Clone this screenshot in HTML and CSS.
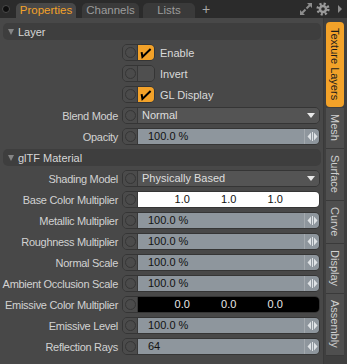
FILE: index.html
```html
<!DOCTYPE html>
<html>
<head>
<meta charset="utf-8">
<link rel="stylesheet" href="styles.css">
</head>
<body>
<div class="app">
  <div class="tabbar">
    <span class="dot"></span>
    <div class="tab active t-props">Properties</div>
    <div class="tab t-chan">Channels</div>
    <div class="tab t-lists">Lists</div>
    <span class="plus">+</span>
    <div class="tools">
      <svg class="ico" width="14" height="14" viewBox="0 0 14 14"><path d="M8 1h5v5z M1 8v5h5z" fill="#8c8c8c"/><path d="M7.5 6.5L11 3 M6.5 7.5L3 11" stroke="#8c8c8c" stroke-width="2"/></svg>
      <svg class="ico" width="14" height="14" viewBox="0 0 14 14"><circle cx="7" cy="7" r="5.3" fill="none" stroke="#9a9a9a" stroke-width="2.6" stroke-dasharray="2.1 2.06"/><circle cx="7" cy="7" r="4.3" fill="#9a9a9a"/><circle cx="7" cy="7" r="1.8" fill="#2b2b2b"/></svg>
      <svg class="ico tri-r" width="6" height="10" viewBox="0 0 6 10"><path d="M1 1l4 4-4 4z" fill="#8c8c8c"/></svg>
    </div>
  </div>
  <div class="main">
    <div class="content">
      <div class="group-head"><span class="caret"></span>Layer</div>
      <div class="rows">
        <div class="row"><span class="label"></span><div class="toggle on"><span class="knob"></span><span class="check"><svg width="17" height="15" viewBox="0 0 17 15"><path d="M3.6 7.2L4.4 12L12.6 4" fill="none" stroke="#000" stroke-width="2" stroke-linejoin="miter"/></svg></span></div><span class="tlabel">Enable</span></div>
        <div class="row"><span class="label"></span><div class="toggle"><span class="knob"></span><span class="check"></span></div><span class="tlabel">Invert</span></div>
        <div class="row"><span class="label"></span><div class="toggle on"><span class="knob"></span><span class="check"><svg width="17" height="15" viewBox="0 0 17 15"><path d="M3.6 7.2L4.4 12L12.6 4" fill="none" stroke="#000" stroke-width="2" stroke-linejoin="miter"/></svg></span></div><span class="tlabel">GL Display</span></div>
        <div class="row"><span class="label">Blend Mode</span><div class="field drop"><span class="knob"></span><span class="val">Normal</span><span class="arrow"></span></div></div>
        <div class="row"><span class="label">Opacity</span><div class="field slider"><span class="knob"></span><span class="val">100.0 %</span><span class="end"><svg width="13" height="15" viewBox="0 0 13 15"><path d="M5 3.5v8L1.5 7.5z M8 3.5v8l3.5-4z" fill="#dfe3e6"/><path d="M6.5 3v9" stroke="#dfe3e6" stroke-width="1"/></svg></span></div></div>
      </div>
      <div class="group-head"><span class="caret"></span>glTF Material</div>
      <div class="rows">
        <div class="row"><span class="label">Shading Model</span><div class="field drop"><span class="knob"></span><span class="val">Physically Based</span><span class="arrow"></span></div></div>
        <div class="row"><span class="label">Base Color Multiplier</span><div class="field color white"><span class="knob"></span><span class="vals"><span>1.0</span><span>1.0</span><span>1.0</span></span></div></div>
        <div class="row"><span class="label">Metallic Multiplier</span><div class="field slider"><span class="knob"></span><span class="val">100.0 %</span><span class="end"><svg width="13" height="15" viewBox="0 0 13 15"><path d="M5 3.5v8L1.5 7.5z M8 3.5v8l3.5-4z" fill="#dfe3e6"/><path d="M6.5 3v9" stroke="#dfe3e6" stroke-width="1"/></svg></span></div></div>
        <div class="row"><span class="label">Roughness Multiplier</span><div class="field slider"><span class="knob"></span><span class="val">100.0 %</span><span class="end"><svg width="13" height="15" viewBox="0 0 13 15"><path d="M5 3.5v8L1.5 7.5z M8 3.5v8l3.5-4z" fill="#dfe3e6"/><path d="M6.5 3v9" stroke="#dfe3e6" stroke-width="1"/></svg></span></div></div>
        <div class="row"><span class="label">Normal Scale</span><div class="field slider"><span class="knob"></span><span class="val">100.0 %</span><span class="end"><svg width="13" height="15" viewBox="0 0 13 15"><path d="M5 3.5v8L1.5 7.5z M8 3.5v8l3.5-4z" fill="#dfe3e6"/><path d="M6.5 3v9" stroke="#dfe3e6" stroke-width="1"/></svg></span></div></div>
        <div class="row"><span class="label">Ambient Occlusion Scale</span><div class="field slider"><span class="knob"></span><span class="val">100.0 %</span><span class="end"><svg width="13" height="15" viewBox="0 0 13 15"><path d="M5 3.5v8L1.5 7.5z M8 3.5v8l3.5-4z" fill="#dfe3e6"/><path d="M6.5 3v9" stroke="#dfe3e6" stroke-width="1"/></svg></span></div></div>
        <div class="row"><span class="label">Emissive Color Multiplier</span><div class="field color black"><span class="knob"></span><span class="vals"><span>0.0</span><span>0.0</span><span>0.0</span></span></div></div>
        <div class="row"><span class="label">Emissive Level</span><div class="field slider"><span class="knob"></span><span class="val">100.0 %</span><span class="end"><svg width="13" height="15" viewBox="0 0 13 15"><path d="M5 3.5v8L1.5 7.5z M8 3.5v8l3.5-4z" fill="#dfe3e6"/><path d="M6.5 3v9" stroke="#dfe3e6" stroke-width="1"/></svg></span></div></div>
        <div class="row"><span class="label">Reflection Rays</span><div class="field slider"><span class="knob"></span><span class="val">64</span><span class="end"><svg width="13" height="15" viewBox="0 0 13 15"><path d="M5 3.5v8L1.5 7.5z M8 3.5v8l3.5-4z" fill="#dfe3e6"/><path d="M6.5 3v9" stroke="#dfe3e6" stroke-width="1"/></svg></span></div></div>
      </div>
    </div>
    <div class="side">
      <div class="vtab active">Texture Layers</div>
      <div class="vtab">Mesh</div>
      <div class="vtab">Surface</div>
      <div class="vtab">Curve</div>
      <div class="vtab">Display</div>
      <div class="vtab">Assembly</div>
    </div>
  </div>
</div>
</body>
</html>
```

FILE: styles.css
```css
* { box-sizing: border-box; margin: 0; padding: 0; }
html, body { width: 347px; height: 364px; overflow: hidden; background: #484848; }
body { font-family: "Liberation Sans", Arial, sans-serif; font-size: 11px; color: #d4d4d4; }

.app { display: flex; flex-direction: column; height: 364px; }

.tabbar { height: 18px; background: #2b2b2b; display: flex; align-items: flex-end; flex: none; }
.dot { width: 8px; height: 8px; border-radius: 50%; background: #0e0e0e; border: 1px solid #4a4a4a; align-self: center; margin: 0 6px 0 2px; }
.tab { height: 15px; line-height: 15px; border-radius: 5px 5px 0 0; background: #3a3a3a; color: #9c9c9c; text-align: center; font-size: 11.5px; }
.tab.active { background: #484848; color: #f3a229; }
.t-props { width: 60px; margin-right: 6px; }
.t-chan { width: 57px; margin-right: 4px; }
.t-lists { width: 52px; }
.plus { align-self: center; margin-left: 7px; color: #a8a8a8; font-size: 14px; line-height: 14px; }
.tools { margin-left: auto; align-self: center; display: flex; align-items: center; gap: 3px; padding-right: 4px; }
.tri-r { margin-left: 4px; }

.main { flex: 1; display: flex; }
.content { width: 323px; padding-top: 5px; }
.group-head { height: 17px; margin: 0 2px 0 3px; border-radius: 5px; background: #3e3e3e; display: flex; align-items: center; padding-left: 5px; color: #d6d6d6; }
.caret { width: 0; height: 0; border-left: 3px solid transparent; border-right: 3px solid transparent; border-top: 6px solid #858585; margin-right: 4px; }

.rows { display: flex; flex-direction: column; gap: 4px; margin: 4px 0; }
.row { display: flex; align-items: center; height: 17px; }
.label { width: 122px; padding-right: 4px; text-align: right; white-space: nowrap; letter-spacing: -0.3px; color: #d2d2d2; }

.toggle { width: 33px; height: 17px; display: flex; border: 1px solid #353535; border-radius: 5px; overflow: hidden; }
.knob { width: 15px; flex: none; background: #4b4b4b; border-right: 1px solid #383838; display: flex; align-items: center; justify-content: center; }
.knob::before { content: ""; width: 9px; height: 9px; border-radius: 50%; border: 1px solid #363636; }
.check { flex: 1; background: #4f4f4f; display: flex; }
.toggle.on .check { background: #f3a229; }
.tlabel { margin-left: 5px; color: #dadada; }

.field { width: 198px; height: 17px; display: flex; border: 1px solid #353535; border-radius: 5px; overflow: hidden; }
.val { flex: 1; line-height: 15px; white-space: nowrap; }
.drop .val { background: #545454; color: #dedede; padding-left: 4px; }
.drop .arrow { width: 16px; background: #545454; display: flex; align-items: center; justify-content: center; }
.drop .arrow::before { content: ""; border-left: 4px solid transparent; border-right: 4px solid transparent; border-top: 5px solid #e8e8e8; }
.slider .val { background: #8e969d; color: #121212; padding-left: 10px; }
.slider .end { width: 15px; background: #8e969d; border-left: 1px solid #a3a9ae; display: flex; align-items: center; justify-content: center; }
.color .vals { flex: 1; display: grid; grid-template-columns: repeat(3, 46.5px); padding-left: 21px; line-height: 15px; text-align: center; }
.white .vals { background: #ffffff; color: #111; }
.black .vals { background: #000000; color: #e8e8e8; }

.side { width: 24px; background: #3f3f3f; border-left: 1px solid #393939; padding: 4px 0 0 2px; display: flex; flex-direction: column; }
.vtab { width: 18px; writing-mode: vertical-rl; line-height: 18px; padding: 6px 0 7px; background: #4f4f4f; color: #cfcfcf; border-bottom: 1px solid #3a3a3a; white-space: nowrap; }
.vtab.active { background: #f3a229; color: #1c1c1c; border-radius: 4px; border-bottom: none; margin-bottom: 1px; }
```
